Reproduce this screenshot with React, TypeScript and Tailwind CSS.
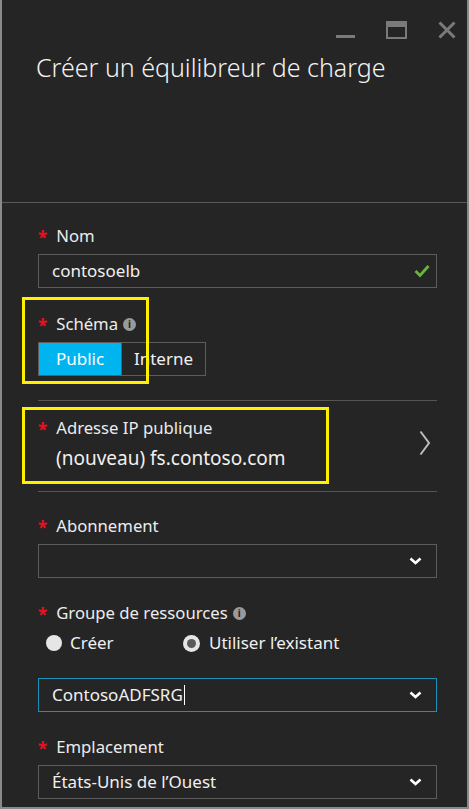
const font = { fontFamily: '"Noto Sans", "Open Sans", sans-serif' };

function Star() {
  return <span className="text-[#e81123] text-[17px] font-bold mr-[9px] leading-none relative top-[1px]">*</span>;
}

function Info() {
  return (
    <span className="inline-flex w-[13px] h-[13px] rounded-full bg-[#9a9a9a] items-center justify-center ml-[5px] text-[10px] font-bold text-[#252525] leading-none">
      i
    </span>
  );
}

function Label({ text, info }: { text: string; info?: boolean }) {
  return (
    <div className="flex items-center h-[22px] text-[16.7px] text-[#ececec]">
      <Star />
      <span>{text}</span>
      {info && <Info />}
    </div>
  );
}

function ChevronDown() {
  return (
    <svg width="13" height="8" viewBox="0 0 13 8" className="shrink-0">
      <path d="M1.5 1.5 L6.5 6 L11.5 1.5" stroke="#ffffff" strokeWidth="2.6" fill="none" />
    </svg>
  );
}

function Select({ value, focused, cursor }: { value?: string; focused?: boolean; cursor?: boolean }) {
  return (
    <div
      className={`flex items-center h-[34px] border ${focused ? 'border-[#1c8fb8]' : 'border-[#5c5c5c]'} pl-[13px] pr-[14px] text-[17px] text-[#f0f0f0]`}
    >
      <span className="flex-1 flex items-center">
        {value}
        {cursor && <span className="inline-block w-[1px] h-[20px] bg-white ml-[1px]" />}
      </span>
      <ChevronDown />
    </div>
  );
}

export default function App() {
  return (
    <div
      style={font}
      className="w-[469px] h-[809px] bg-[#252525] border-l-2 border-r-2 border-b-2 border-[#8a8a8a] flex flex-col overflow-hidden"
    >
      <header className="h-[203px] border-b border-[#5a5a5a] flex flex-col">
        <div className="flex justify-end items-start pt-[21px] pr-[11px] gap-[31px]">
          <svg width="19" height="18" viewBox="0 0 19 18">
            <rect x="0" y="14" width="19" height="3" fill="#7a7a7a" />
          </svg>
          <svg width="21" height="18" viewBox="0 0 21 18">
            <rect x="1" y="1" width="19" height="16" stroke="#7a7a7a" strokeWidth="2" fill="none" />
            <rect x="1" y="1" width="19" height="5" fill="#7a7a7a" />
          </svg>
          <svg width="18" height="18" viewBox="0 0 18 18">
            <path d="M1.5 1.5 L16.5 16.5 M16.5 1.5 L1.5 16.5" stroke="#7a7a7a" strokeWidth="3" />
          </svg>
        </div>
        <h1 className="pl-[34px] mt-[13px] text-[25px] font-light text-[#f2f2f2] leading-[30px]">
          Créer un équilibreur de charge
        </h1>
      </header>

      <main className="relative flex flex-col pl-[36px] pr-[30px]">
        <div className="mt-[22px]">
          <Label text="Nom" />
        </div>
        <div className="mt-[7px] flex items-center h-[34px] border border-[#5c5c5c] pl-[13px] pr-[6px] text-[17px] text-[#f0f0f0]">
          <span className="flex-1">contosoelb</span>
          <svg width="16" height="14" viewBox="0 0 16 14">
            <path d="M1.5 7 L6 11.5 L14.5 2" stroke="#6ab43e" strokeWidth="2.8" fill="none" />
          </svg>
        </div>

        <div className="mt-[25px]">
          <Label text="Schéma" info />
        </div>
        <div className="mt-[7px] flex h-[34px] text-[17px]">
          <div className="w-[84px] bg-[#00b4f0] border border-[#5c5c5c] flex items-center justify-center text-white">
            Public
          </div>
          <div className="w-[84px] border border-l-0 border-[#5c5c5c] flex items-center justify-center text-[#f0f0f0]">
            Interne
          </div>
        </div>

        <div className="mt-[24px] h-px bg-[#555555]" />

        <div className="flex items-center">
          <div className="flex-1">
            <div className="mt-[16px]">
              <Label text="Adresse IP publique" />
            </div>
            <div className="mt-[6px] pl-[18px] h-[26px] text-[19px] leading-[26px] text-[#f0f0f0]">
              (nouveau) fs.contoso.com
            </div>
          </div>
          <svg width="12" height="26" viewBox="0 0 12 26" className="mr-[6px] mt-[14px]">
            <path d="M1.5 1.5 L10 13 L1.5 24.5" stroke="#bdbdbd" strokeWidth="2" fill="none" />
          </svg>
        </div>

        <div className="mt-[20px] h-px bg-[#555555]" />

        <div className="mt-[23px]">
          <Label text="Abonnement" />
        </div>
        <div className="mt-[7px]">
          <Select />
        </div>

        <div className="mt-[24px]">
          <Label text="Groupe de ressources" info />
        </div>
        <div className="mt-[8px] flex items-center h-[22px] text-[17px] text-[#f0f0f0] pl-[8px]">
          <span className="w-[16px] h-[16px] rounded-full bg-[#e6e6e6] mr-[8px]" />
          <span className="w-[113px]">Créer</span>
          <span className="w-[17px] h-[17px] rounded-full bg-[#e6e6e6] mr-[9px] flex items-center justify-center">
            <span className="w-[9px] h-[9px] rounded-full bg-[#5a5a5a]" />
          </span>
          <span>Utiliser l’existant</span>
        </div>
        <div className="mt-[24px]">
          <Select value="ContosoADFSRG" focused cursor />
        </div>

        <div className="mt-[24px]">
          <Label text="Emplacement" />
        </div>
        <div className="mt-[7px]">
          <Select value="États-Unis de l’Ouest" />
        </div>

        {/* annotation boxes */}
        <div className="absolute left-[20px] top-[94px] w-[127px] h-[87px] border-[3px] border-[#ffef00] pointer-events-none" />
        <div className="absolute left-[20px] top-[204px] w-[307px] h-[77px] border-[3px] border-[#ffef00] pointer-events-none" />
      </main>
    </div>
  );
}
